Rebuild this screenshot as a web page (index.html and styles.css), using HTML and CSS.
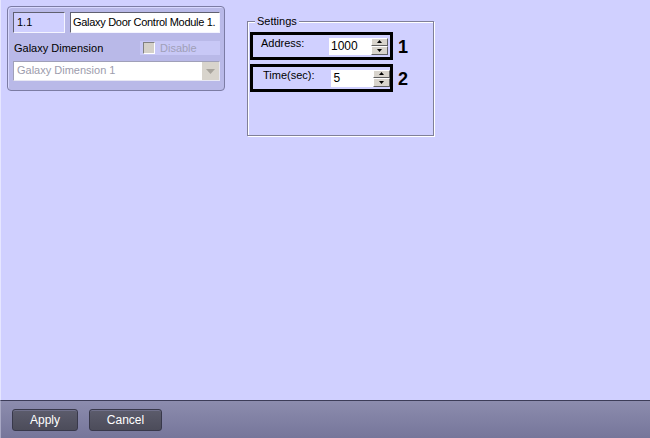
FILE: index.html
```html
<!DOCTYPE html>
<html>
<head>
<meta charset="utf-8">
<link rel="stylesheet" href="styles.css">
</head>
<body>
<div class="page">
  <div class="main">
    <div class="panel">
      <div class="row1">
        <div class="field id-field">1.1</div>
        <div class="field name-field">Galaxy Door Control Module 1.</div>
      </div>
      <div class="row2">
        <span class="dim-label">Galaxy Dimension</span>
        <span class="disable-strip"><span class="checkbox"></span><span class="disable-text">Disable</span></span>
      </div>
      <div class="select">
        <span class="select-text">Galaxy Dimension 1</span>
        <span class="select-btn"><svg width="9" height="5" viewBox="0 0 9 5"><path d="M0 0h9L4.5 5z" fill="#a8a49c"/></svg></span>
      </div>
    </div>
    <div class="settings">
      <div class="legend">Settings</div>
      <div class="frame">
        <div class="line">
          <div class="box box-addr">
            <span class="lbl">Address:</span>
            <span class="spin-input addr-input">1000</span>
            <span class="spinner"><span class="sp-btn"><svg width="5" height="3" viewBox="0 0 5 3"><path d="M2.5 0L5 3H0z" fill="#000"/></svg></span><span class="sp-btn"><svg width="5" height="3" viewBox="0 0 5 3"><path d="M0 0h5L2.5 3z" fill="#000"/></svg></span></span>
          </div>
          <span class="num">1</span>
        </div>
        <div class="line">
          <div class="box box-time">
            <span class="lbl">Time(sec):</span>
            <span class="spin-input time-input">5</span>
            <span class="spinner"><span class="sp-btn"><svg width="5" height="3" viewBox="0 0 5 3"><path d="M2.5 0L5 3H0z" fill="#000"/></svg></span><span class="sp-btn"><svg width="5" height="3" viewBox="0 0 5 3"><path d="M0 0h5L2.5 3z" fill="#000"/></svg></span></span>
          </div>
          <span class="num">2</span>
        </div>
      </div>
    </div>
  </div>
  <div class="bottom">
    <button class="btn btn-apply">Apply</button>
    <button class="btn btn-cancel">Cancel</button>
  </div>
</div>
</body>
</html>
```

FILE: styles.css
```css
* { box-sizing: border-box; }
html, body { margin: 0; padding: 0; }
body {
  width: 650px;
  height: 438px;
  overflow: hidden;
  font-family: "Liberation Sans", Arial, sans-serif;
  font-size: 11px;
  color: #000;
}
.page {
  width: 650px;
  height: 438px;
  display: flex;
  flex-direction: column;
}
.main {
  height: 400px;
  background: #d0d0ff;
  border-left: 1px solid #e6e6ff;
  display: flex;
  align-items: flex-start;
  padding: 6px 0 0 6px;
}
.panel {
  width: 218px;
  height: 85px;
  background: #b9b9e8;
  border: 1px solid #7c7ca4;
  border-radius: 4px;
  box-shadow: inset 1px 1px 0 #d8d8ff;
  padding: 5px 4px 0 5px;
  display: flex;
  flex-direction: column;
}
.row1 {
  display: flex;
  gap: 5px;
  height: 21px;
}
.field {
  height: 21px;
  line-height: 18px;
  padding-left: 3px;
  font-size: 11px;
  border-top: 1px solid #606070;
  border-left: 1px solid #606070;
  border-right: 1px solid #f4f4ff;
  border-bottom: 1px solid #f4f4ff;
  white-space: nowrap;
  overflow: hidden;
}
.id-field { width: 52px; background: #d0d0ff; }
.name-field { width: 150px; background: #fff; padding-left: 2px; letter-spacing: -0.3px; }
.row2 {
  display: flex;
  align-items: center;
  justify-content: space-between;
  height: 14px;
  margin-top: 8px;
}
.dim-label { padding-left: 1px; }
.disable-strip {
  width: 80px;
  height: 14px;
  background: #c8c8f6;
  display: flex;
  align-items: center;
  padding-left: 3px;
}
.checkbox {
  width: 12px;
  height: 12px;
  background: #d4d0c8;
  border-top: 1px solid #808080;
  border-left: 1px solid #808080;
  border-right: 1px solid #fff;
  border-bottom: 1px solid #fff;
}
.disable-text { color: #a0a0b8; margin-left: 5px; }
.select {
  margin-top: 6px;
  width: 207px;
  height: 20px;
  background: #fff;
  border: 1px solid #e8e8f4;
  border-top-color: #a0a0b8;
  border-left-color: #a0a0b8;
  display: flex;
  align-items: stretch;
  justify-content: space-between;
}
.select-text { color: #9c9cac; line-height: 17px; padding-left: 3px; }
.select-btn {
  width: 17px;
  background: #d8d4cc;
  display: flex;
  align-items: center;
  justify-content: center;
}
.settings {
  margin-left: 22px;
  margin-top: 9px;
  width: 187px;
  position: relative;
}
.legend {
  position: absolute;
  left: 8px;
  top: 0;
  padding: 0 2px;
  background: #d0d0ff;
  line-height: 13px;
}
.frame {
  margin-top: 6px;
  height: 115px;
  border: 1px solid #808098;
  box-shadow: inset 1px 1px 0 #fff, 1px 1px 0 #fff;
  padding: 10px 0 0 2px;
  display: flex;
  flex-direction: column;
  gap: 4px;
}
.line {
  display: flex;
  align-items: center;
}
.box {
  width: 143px;
  height: 28px;
  border: 3px solid #000;
  display: flex;
  align-items: center;
}
.lbl { margin-top: -6px; }
.box-addr .lbl { margin-left: 8px; width: 68px; }
.box-time .lbl { margin-left: 10px; width: 69px; }
.spin-input {
  background: #fff;
  height: 17px;
  line-height: 17px;
  font-size: 12px;
  padding-left: 2px;
}
.addr-input { width: 42px; }
.time-input { width: 42px; }
.spinner {
  width: 17px;
  height: 17px;
  display: flex;
  flex-direction: column;
}
.sp-btn {
  flex: 1;
  background: #d8d4cc;
  border-top: 1px solid #fff;
  border-left: 1px solid #fff;
  border-right: 1px solid #606060;
  border-bottom: 1px solid #606060;
  display: flex;
  align-items: center;
  justify-content: center;
}
.num {
  font-size: 18px;
  font-weight: bold;
  margin-left: 5px;
  margin-top: 3px;
}
.bottom {
  height: 38px;
  border-top: 1px solid #3c3c58;
  border-left: 1px solid #a8a8c4;
  background: linear-gradient(#8c8cae, #76769a);
  display: flex;
  align-items: flex-start;
  padding: 8px 0 0 11px;
  gap: 11px;
}
.btn {
  height: 22px;
  border: 1px solid #38384a;
  border-radius: 3px;
  background: linear-gradient(#5c5c6c, #4c4c5a);
  color: #fff;
  font-family: "Liberation Sans", Arial, sans-serif;
  font-size: 12px;
  padding: 0;
  box-shadow: inset 0 1px 0 #70708a;
}
.btn-apply { width: 66px; }
.btn-cancel { width: 73px; }
```
